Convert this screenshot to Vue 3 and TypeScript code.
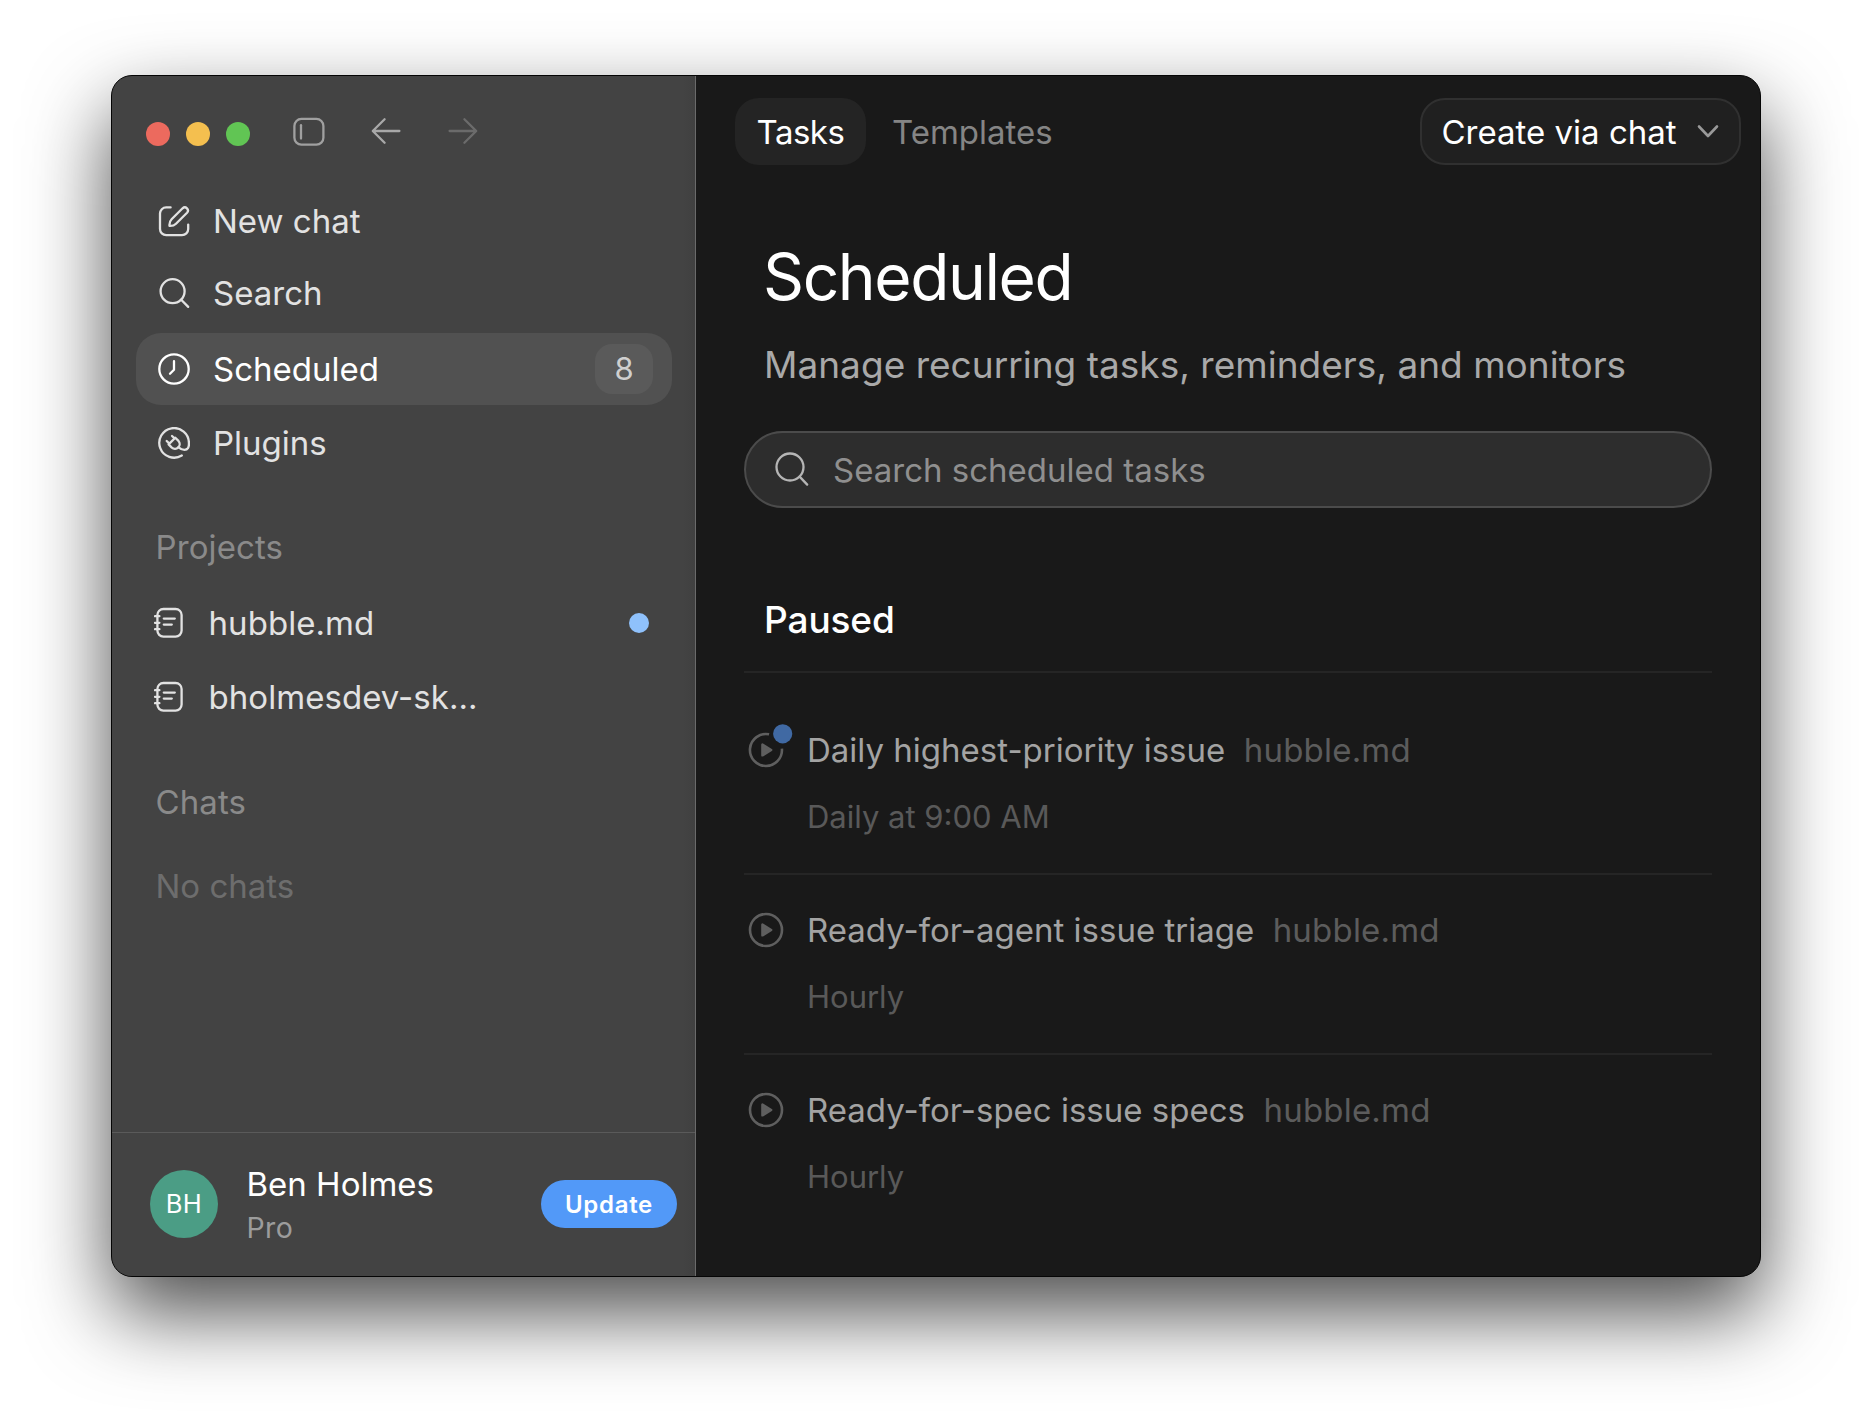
<script setup lang="ts">
interface Task {
  title: string
  project: string
  schedule: string
  unread: boolean
}

const projects = [
  { name: 'hubble.md', unread: true },
  { name: 'bholmesdev-sk...', unread: false },
]

const tasks: Task[] = [
  { title: 'Daily highest-priority issue', project: 'hubble.md', schedule: 'Daily at 9:00 AM', unread: true },
  { title: 'Ready-for-agent issue triage', project: 'hubble.md', schedule: 'Hourly', unread: false },
  { title: 'Ready-for-spec issue specs', project: 'hubble.md', schedule: 'Hourly', unread: false },
]
</script>

<template>
  <div class="desktop">
    <div class="window">
      <aside class="sidebar">
        <header class="titlebar">
          <span class="light red"></span>
          <span class="light yellow"></span>
          <span class="light green"></span>
          <svg class="toggle" width="32" height="30" viewBox="0 0 32 30">
            <rect x="1.4" y="1.9" width="29" height="25.8" rx="7" />
            <path d="M8 8.2v13.4" />
          </svg>
          <svg class="back" width="30" height="28" viewBox="0 0 30 28">
            <path d="M28.400 14H2M13.600 2.200 1.800 14l11.800 11.800" />
          </svg>
          <svg class="forward" width="30" height="28" viewBox="0 0 30 28">
            <path d="M1.600 14H28M16.400 2.200 28.200 14l-11.800 11.800" />
          </svg>
        </header>

        <nav class="nav">
          <a class="row new-chat">
            <svg class="icon" viewBox="0 0 32 32">
              <path d="M12.600 2.400H8.200A6.200 6.200 0 0 0 2 8.600V24a6.200 6.200 0 0 0 6.200 6.200H24A6.200 6.200 0 0 0 30.200 24V19.600" />
              <path d="M11.500 20.900C11.200 17.600 12 15.800 13.600 14.200L24.600 3.300a3.150 3.150 0 0 1 4.450 4.450L18 18.700C16.400 20.300 14.800 21.100 11.500 20.900Z" />
            </svg>
            <span>New chat</span>
          </a>
          <a class="row search-nav">
            <svg class="icon" viewBox="0 0 32 32">
              <circle cx="14.600" cy="14.200" r="12" />
              <path d="M23.200 22.800 30.200 29.900" />
            </svg>
            <span>Search</span>
          </a>
          <a class="row active">
            <svg class="icon" viewBox="0 0 32 32">
              <circle cx="16" cy="16" r="14.700" />
              <path d="M16 8.200v8.600L12 20.800" />
            </svg>
            <span>Scheduled</span>
            <span class="badge">8</span>
          </a>
          <a class="row plugins">
            <svg class="icon" viewBox="0 0 32 32">
              <path d="M23.800 28.500A14.800 14.800 0 1 1 30.900 16C31.200 20.600 29.600 22.800 26.500 22.800 24 22.800 22.600 22 20.600 20.300" />
              <path d="M10.600 17.400 17.300 10.700 20.500 13.900A4.750 4.750 0 0 1 13.800 20.600ZM8.700 14l2.700 2.600M14 9l2.600 2.400" />
            </svg>
            <span>Plugins</span>
          </a>
        </nav>

        <h2 class="label">Projects</h2>
        <a v-for="project in projects" :key="project.name" class="row project">
          <svg class="icon" viewBox="0 0 32 32">
            <rect x="3.400" y="2" width="24.200" height="27.600" rx="6" />
            <path d="M9.800 11.600h11M9.800 17.600h8M.900 9.200h4.500M.900 15.800h4.500M.900 22.200h4.500" />
          </svg>
          <span>{{ project.name }}</span>
          <i v-if="project.unread" class="dot"></i>
        </a>

        <h2 class="label chats">Chats</h2>
        <p class="empty">No chats</p>

        <footer class="account">
          <span class="avatar">BH</span>
          <div class="who">
            <span class="name">Ben Holmes</span>
            <span class="plan">Pro</span>
          </div>
          <button class="update">Update</button>
        </footer>
      </aside>

      <main class="main">
        <div class="toolbar">
          <button class="tab selected">Tasks</button>
          <button class="tab templates">Templates</button>
          <button class="create">
            <span>Create via chat</span>
            <svg width="24" height="16" viewBox="0 0 24 16"><path d="M3 2.500l9 9.500 9-9.500" /></svg>
          </button>
        </div>

        <div class="content">
          <h1>Scheduled</h1>
          <p class="lead">Manage recurring tasks, reminders, and monitors</p>
          <div class="search">
            <svg width="36" height="36" viewBox="0 0 36 36">
              <circle cx="16" cy="16" r="13.500" />
              <path d="M25.600 25.600 33.200 33.600" />
            </svg>
            <span>Search scheduled tasks</span>
          </div>

          <h3>Paused</h3>
          <ul class="tasks">
            <li v-for="task in tasks" :key="task.title" class="task">
              <svg class="play" viewBox="-18 -18 36 36">
                <path v-if="task.unread" class="ring" d="M3.100-15.700A16 16 0 1 0 15.900-1.300" />
                <circle v-else class="ring" r="16" />
                <path class="triangle" d="M-3.600-5.400V5.400L5.200 0Z" />
                <circle v-if="task.unread" class="notice" cx="16.700" cy="-16.200" r="9.600" />
              </svg>
              <div class="detail">
                <div class="headline">
                  <span class="title">{{ task.title }}</span>
                  <span class="source">{{ task.project }}</span>
                </div>
                <div class="schedule">{{ task.schedule }}</div>
              </div>
            </li>
          </ul>
        </div>
      </main>
    </div>
  </div>
</template>

<style>
body {
  background: #fff;
}
</style>

<style scoped>
* {
  box-sizing: border-box;
}

.desktop {
  width: 1872px;
  height: 1424px;
  padding: 75px 111px 0;
  overflow: hidden;
  font-family: Inter, 'Liberation Sans', sans-serif;
  font-size: 33px;
  white-space: nowrap;
}

.window {
  display: flex;
  width: 1650px;
  height: 1202px;
  border: 1px solid #050505;
  border-radius: 21px;
  overflow: hidden;
  background: #191919;
  box-shadow: 0 36px 82px rgba(0, 0, 0, 0.7);
}

h1, h2, h3, p, ul {
  margin: 0;
  padding: 0;
  font-weight: 400;
}

button {
  border: 0;
  padding: 0;
  font: inherit;
  letter-spacing: inherit;
}

svg {
  flex: none;
  fill: none;
  stroke: currentColor;
  stroke-width: 2.3;
  stroke-linecap: round;
  stroke-linejoin: round;
}

.sidebar {
  display: flex;
  flex-direction: column;
  width: 584px;
  border-right: 1px solid #6a6a6a;
  background: linear-gradient(90deg, #434343 98%, #404040);
  color: #e2e2e2;
}

.titlebar {
  display: flex;
  align-items: center;
  height: 109px;
  padding: 0 0 0 34px;
}

.light {
  width: 24px;
  height: 24px;
  margin: 7px 16px 0 0;
  border-radius: 50%;
}

.red { background: #ec6a5e; }
.yellow { background: #f4bf4f; }
.green { background: #61c554; }

.toggle { margin: 2px 0 0 27px; color: #a0a0a0; }
.back { margin: 1px 0 0 46px; color: #a8a8a8; }
.forward { margin: 1px 0 0 47px; color: #6b6b6b; }

.nav {
  display: flex;
  flex-direction: column;
}

.row {
  display: flex;
  align-items: center;
  height: 72px;
  margin: 0 23px 0 24px;
  padding: 0 19px 0 22px;
  border-radius: 25px;
}

.icon {
  width: 32px;
  height: 32px;
  margin-right: 23px;
}

.search-nav { margin-bottom: 1px; }
.active { margin-top: 3px; background: #515151; color: #fff; }
.plugins { margin-top: 2px; }

.badge {
  width: 58px;
  height: 50px;
  margin-left: auto;
  border-radius: 17px;
  background: #5a5a5a;
  color: #cfcfcf;
  font-size: 31px;
  line-height: 50px;
  text-align: center;
}

.label {
  margin: 32px 0 4px 43.500px;
  color: #8a8a8a;
  font-size: 33px;
  line-height: 72px;
  letter-spacing: 0.1px;
}

.project { padding: 0 23px 0 18px; }
.project .icon { margin-right: 22.500px; }
.project + .project { margin-top: 2px; }
.project span { letter-spacing: 0.05px; }

.dot {
  width: 20px;
  height: 20px;
  margin-left: auto;
  border-radius: 50%;
  background: #8fc1fb;
}

.chats { margin-top: 33px; margin-bottom: 12px; }

.empty {
  margin-left: 43.500px;
  color: #6d6d6d;
  line-height: 72px;
}

.account {
  display: flex;
  align-items: center;
  height: 144px;
  margin-top: auto;
  padding: 0 18px 2px 38px;
  border-top: 1px solid #5a5a5a;
}

.avatar {
  width: 68px;
  height: 68px;
  border-radius: 50%;
  background: #4b9d85;
  color: #fff;
  font-size: 25.500px;
  line-height: 68px;
  letter-spacing: 0.5px;
  text-align: center;
}

.who {
  display: flex;
  flex-direction: column;
  margin: 4px 0 0 28.500px;
  line-height: 44px;
}

.plan {
  color: #9c9c9c;
  font-size: 28.500px;
  letter-spacing: 0.4px;
}

.name { color: #fff; }

.update {
  width: 136px;
  height: 48px;
  margin-left: auto;
  border-radius: 24px;
  background: #5299f8;
  color: #fff;
  font-size: 24px;
  font-weight: 600;
  line-height: 49px;
  letter-spacing: 0.7px;
}

.main {
  flex: 1;
  display: flex;
  flex-direction: column;
}

.toolbar {
  display: flex;
  height: 161px;
  padding: 22px 19px 0 39px;
}

.tab {
  height: 67px;
  padding-top: 1px;
  border-radius: 24px;
  background: none;
  color: #858585;
  text-align: left;
}

.selected {
  width: 131px;
  padding-left: 21.500px;
  background: #242424;
  color: #fff;
  letter-spacing: -0.5px;
}

.templates { margin-left: 26px; }

.create {
  display: flex;
  align-items: center;
  justify-content: space-between;
  width: 321px;
  height: 67px;
  margin-left: auto;
  padding: 0 19px 0 19.500px;
  border: 2px solid #303030;
  border-radius: 25px;
  background: #202020;
  color: #fff;
}

.create span { padding-top: 1px; }
.create svg { color: #999; stroke-width: 2.6; }

.content { padding: 0 48px; }

h1 {
  margin-left: 19px;
  color: #fff;
  font-size: 64px;
  line-height: 80px;
  letter-spacing: -1.4px;
}

.lead {
  margin: 26px 0 0 20px;
  color: #a9a9a9;
  font-size: 37px;
  line-height: 44px;
  letter-spacing: 0.02px;
}

.search {
  display: flex;
  align-items: center;
  height: 77px;
  margin-top: 44px;
  padding-left: 28px;
  border: 2px solid #4b4b4b;
  border-radius: 39px;
  background: #2d2d2d;
  color: #8f8f8f;
}

.search span { padding-top: 1px; }
.search svg { margin: -1px 23.500px 0 -0.500px; color: #b5b5b5; }

h3 {
  margin: 90px 0 29px 20px;
  color: #fff;
  font-size: 37px;
  font-weight: 500;
  line-height: 44px;
  letter-spacing: -0.1px;
}

.tasks { list-style: none; }

.task {
  display: flex;
  height: 180px;
  padding-top: 35px;
  border-top: 2px solid #252525;
}

.task:first-child { height: 202px; padding-top: 57px; }

.play {
  width: 36px;
  height: 36px;
  margin: 2px 23.500px 0 3.500px;
  overflow: visible;
  color: #5f5f5f;
}

.ring { stroke-width: 2.600; stroke-linecap: butt; }
.triangle { fill: currentColor; stroke-width: 2.400; }
.notice { fill: #4069a3; stroke: none; }

.headline {
  display: flex;
  gap: 18.500px;
  line-height: 40px;
}

.title { color: #a3a3a3; }
.source { color: #5c5c5c; letter-spacing: 0.2px; }

.schedule {
  margin-top: 27px;
  color: #595959;
  font-size: 31px;
  line-height: 40px;
}
</style>
